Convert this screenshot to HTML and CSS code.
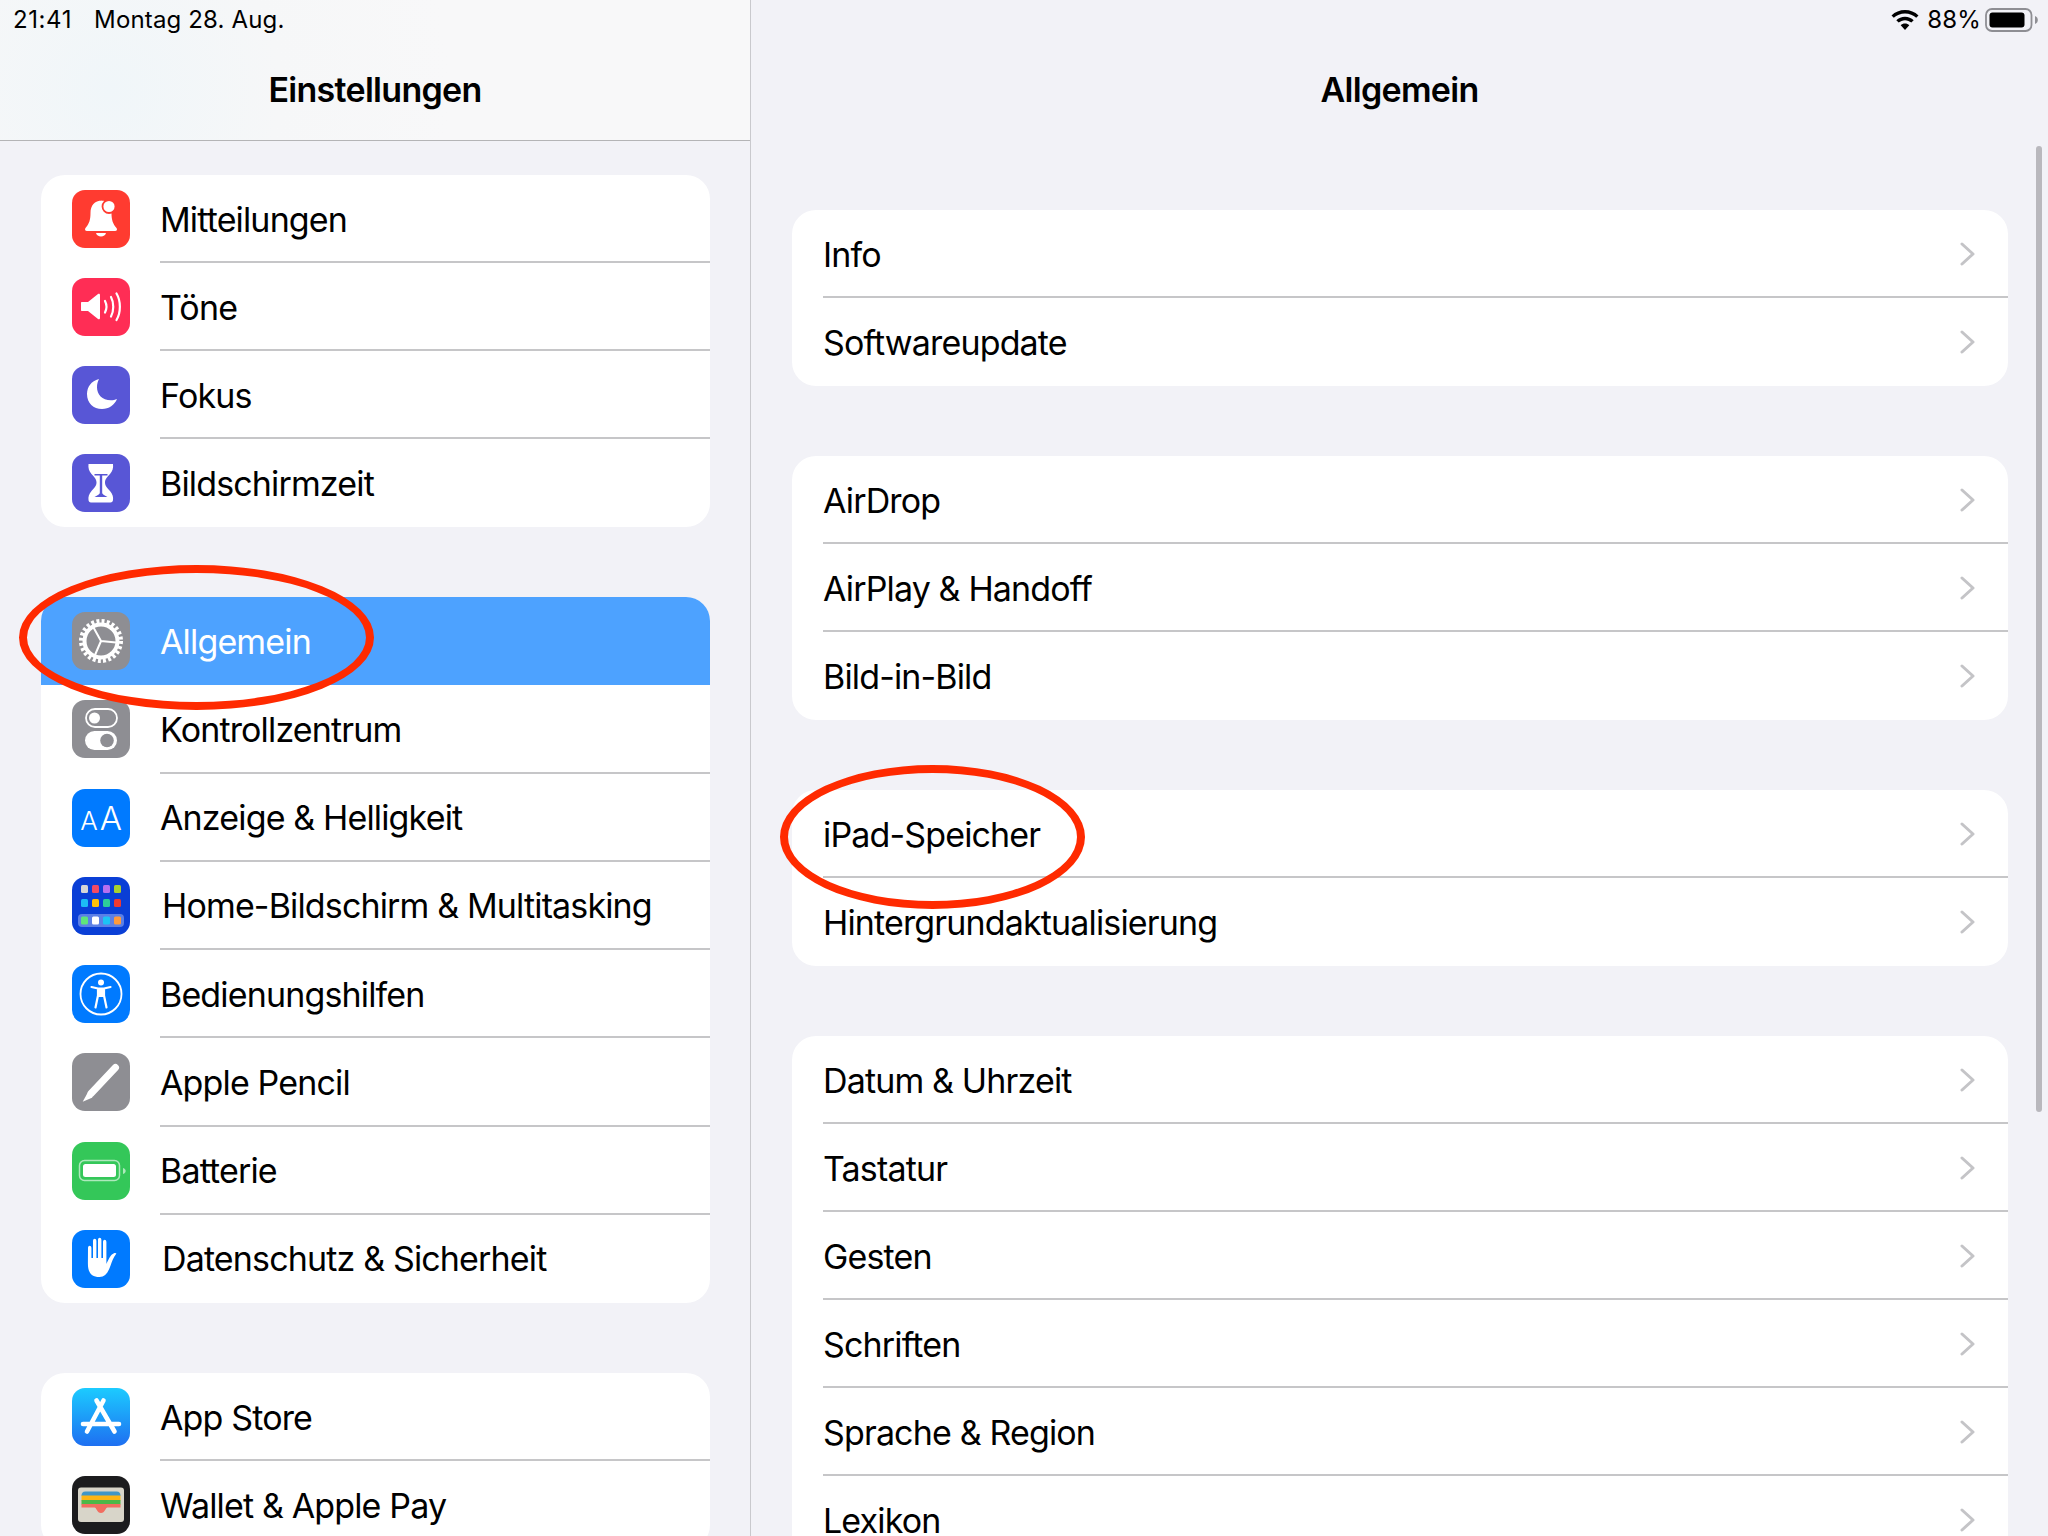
FILE: index.html
```html
<!DOCTYPE html>
<html lang="de">
<head>
<meta charset="utf-8">
<title>Einstellungen</title>
<link rel="stylesheet" href="styles.css">
</head>
<body>
<div class="ipad">
  <aside class="sidebar">
    <header class="side-head">
      <div class="status-left"><span class="clock">21:41</span><span>Montag 28. Aug.</span></div>
      <h1 class="title">Einstellungen</h1>
    </header>
    <div class="side-list">
      <section class="group">
        <div class="row">
          <svg class="icon" viewBox="0 0 58 58"><rect width="58" height="58" rx="13" fill="#ff3b30"/><path d="M30 10.500c-7.500 0-11.500 5-11.500 12.500 0 7-1.500 11-5 15-1 1.200-.5 3 1.500 3h28c2 0 2.500-1.800 1.500-3-3.500-4-5-8-5-15 0-7.500-3-12.500-10.500-12.500z" fill="#fff"/><path d="M24 43h10c-.5 2-2.500 3.500-5 3.500s-4.500-1.500-5-3.500z" fill="#fff"/><circle cx="37" cy="16.500" r="6.500" fill="#fff" stroke="#ff3b30" stroke-width="1.800"/></svg>
          <div class="row-body">Mitteilungen</div>
        </div>
        <div class="row">
          <svg class="icon" viewBox="0 0 58 58"><rect width="58" height="58" rx="13" fill="#ff2d55"/><path d="M10 24h6l10-8c1-.6 2-.2 2 1v23c0 1.200-1 1.600-2 1l-10-8h-6c-.6 0-1-.4-1-1v-7c0-.6.400-1 1-1z" fill="#fff"/><g fill="none" stroke="#fff" stroke-width="2.200" stroke-linecap="round"><path d="M33 23c1.800 3.500 1.800 8 0 11.500"/><path d="M39 19c3 5.500 3 14 0 19.500"/><path d="M44.500 15.500c4.500 7.500 4.500 19 0 26.500"/></g></svg>
          <div class="row-body">Töne</div>
        </div>
        <div class="row">
          <svg class="icon" viewBox="0 0 58 58"><rect width="58" height="58" rx="13" fill="#5856d6"/><path d="M27 13C19 15 15 21 15 28c0 9 6.500 15 15 15 7 0 12.500-4 15-10-2 1-4 1.300-6 1.300-9 0-14-6-14-13 0-3 .7-5.800 2-8.300z" fill="#fff"/></svg>
          <div class="row-body">Fokus</div>
        </div>
        <div class="row">
          <svg class="icon" viewBox="0 0 58 58"><rect width="58" height="58" rx="13" fill="#5856d6"/><path d="M17 10h24c.5 4-.5 7-3 10-2.500 3-5 5-5 8.500 0 3.500 2.500 5.500 5 8.500 2.500 3 3.500 6 3 9-.1 1.500-1 2.500-2.500 2.500h-19.500c-1.500 0-2.400-1-2.500-2.500-.5-3 .5-6 3-9 2.500-3 5-5 5-8.500 0-3.500-2.500-5.500-5-8.500-2.500-3-3.500-6-3-10z" fill="#fff"/><path d="M22.500 20h13v1.500h-5.300v17.500c0 1.500 3 2.500 5.300 4h-13c2.300-1.500 5.300-2.500 5.300-4v-17.500h-5.300z" fill="#5856d6"/></svg>
          <div class="row-body">Bildschirmzeit</div>
        </div>
      </section>

      <section class="group group-tall">
        <div class="row row-active">
          <svg class="icon" viewBox="0 0 58 58"><rect width="58" height="58" rx="13" fill="#8e8e93"/><circle cx="29" cy="29" r="19" fill="none" stroke="#fff" stroke-width="6" stroke-dasharray="2.800 2.174"/><circle cx="29" cy="29" r="16.500" fill="none" stroke="#fff" stroke-width="4"/><path d="M29 29 21.500 15.500M29 29 44 30.500M29 29 23 43" fill="none" stroke="#fff" stroke-width="2"/></svg>
          <div class="row-body">Allgemein</div>
        </div>
        <div class="row">
          <svg class="icon" viewBox="0 0 58 58"><rect width="58" height="58" rx="13" fill="#8e8e93"/><rect x="14" y="9" width="31" height="18" rx="9" fill="none" stroke="#fff" stroke-width="1.800"/><circle cx="22.500" cy="18" r="5.500" fill="#fff"/><rect x="13" y="31" width="32" height="19" rx="9.500" fill="#fff"/><circle cx="35" cy="40.500" r="6.800" fill="#8e8e93"/></svg>
          <div class="row-body">Kontrollzentrum</div>
        </div>
        <div class="row">
          <div class="icon icon-aa"><span class="aa-small">A</span><span class="aa-big">A</span></div>
          <div class="row-body">Anzeige &amp; Helligkeit</div>
        </div>
        <div class="row row-shift">
          <svg class="icon" viewBox="0 0 58 58"><rect width="58" height="58" rx="13" fill="#0a3fd6"/><rect x="9" y="8" width="7" height="8" rx="1.500" fill="#d6d6d6"/><rect x="20" y="8" width="7" height="8" rx="1.500" fill="#f24a63"/><rect x="31" y="8" width="7" height="8" rx="1.500" fill="#b76ff0"/><rect x="42" y="8" width="7" height="8" rx="1.500" fill="#a8d22e"/><rect x="9" y="22" width="7" height="8" rx="1.500" fill="#1cbcf5"/><rect x="20" y="22" width="7" height="8" rx="1.500" fill="#ffc107"/><rect x="31" y="22" width="7" height="8" rx="1.500" fill="#2dcc9a"/><rect x="42" y="22" width="7" height="8" rx="1.500" fill="#f03a30"/><rect x="6" y="37" width="46" height="13" rx="4" fill="#5c80e6"/><rect x="9" y="39.500" width="7" height="8" rx="1.500" fill="#5fe57a"/><rect x="20" y="39.500" width="7" height="8" rx="1.500" fill="#fff"/><rect x="31" y="39.500" width="7" height="8" rx="1.500" fill="#1cc4f5"/><rect x="42" y="39.500" width="7" height="8" rx="1.500" fill="#ff9a3c"/></svg>
          <div class="row-body">Home-Bildschirm &amp; Multitasking</div>
        </div>
        <div class="row">
          <svg class="icon" viewBox="0 0 58 58"><rect width="58" height="58" rx="13" fill="#007aff"/><circle cx="29" cy="29" r="20.500" fill="none" stroke="#fff" stroke-width="1.800"/><circle cx="29" cy="17.500" r="3" fill="#fff"/><path d="M19.500 22 26 23.500v7l-2.500 12M38.500 22 32 23.500v7l2.500 12M26 23.500h6M26 31h6" fill="none" stroke="#fff" stroke-width="2.200" stroke-linecap="round" stroke-linejoin="round"/><path d="M26.500 23.500h5v8h-5z" fill="#fff"/></svg>
          <div class="row-body">Bedienungshilfen</div>
        </div>
        <div class="row">
          <svg class="icon" viewBox="0 0 58 58"><rect width="58" height="58" rx="13" fill="#8e8e93"/><path d="M43.500 14.500 19 40.500" stroke="#fff" stroke-width="7" stroke-linecap="round"/><path d="M15.500 40 20.500 44.500 10.700 48.800z" fill="#fff"/></svg>
          <div class="row-body">Apple Pencil</div>
        </div>
        <div class="row">
          <svg class="icon" viewBox="0 0 58 58"><rect width="58" height="58" rx="13" fill="#34c759"/><rect x="7.500" y="18.500" width="40" height="20" rx="5" fill="none" stroke="#fff" stroke-opacity=".6" stroke-width="1.500"/><rect x="11" y="22" width="33" height="13" rx="2.500" fill="#fff"/><path d="M51 26c1.800.6 2.700 1.500 2.700 3s-.9 2.400-2.700 3z" fill="#fff" fill-opacity=".6"/></svg>
          <div class="row-body">Batterie</div>
        </div>
        <div class="row row-shift">
          <svg class="icon" viewBox="0 0 58 58"><rect width="58" height="58" rx="13" fill="#007aff"/><path d="M16 18c0-3 3.400-3 3.400 0v10h1.600v-17c0-3 3.400-3 3.400 0v17h1.600v-18c0-3 3.400-3 3.400 0v18h1.600v-16c0-3 3.400-3 3.400 0v22c1-2 3-7 5.500-9.500 1.800-1.800 4-2 4.500-1-3 4-4.500 8-6 12.500-1.800 5-4.500 11-11 11-8.500 0-11.500-5-11.500-13.500z" fill="#fff"/></svg>
          <div class="row-body">Datenschutz &amp; Sicherheit</div>
        </div>
      </section>

      <section class="group">
        <div class="row">
          <svg class="icon" viewBox="0 0 58 58"><defs><linearGradient id="appstore" x1="0" y1="0" x2="0" y2="1"><stop offset="0" stop-color="#1ccbff"/><stop offset="1" stop-color="#1e6ff1"/></linearGradient></defs><rect width="58" height="58" rx="13" fill="url(#appstore)"/><path d="M31.500 12.500 15 43.500M24.500 12.500 42.500 43.500M11 36h36" fill="none" stroke="#fff" stroke-width="4.600" stroke-linecap="round"/></svg>
          <div class="row-body">App Store</div>
        </div>
        <div class="row">
          <svg class="icon" viewBox="0 0 58 58"><rect width="58" height="58" rx="13" fill="#1c1c1e"/><rect x="6" y="11.500" width="46" height="34.500" rx="3" fill="#d8d5c9"/><path d="M9.500 20c0-3 1-4.500 4-4.500h31c3 0 4 1.500 4 4.500z" fill="#3f96c8"/><rect x="9.500" y="19.500" width="39" height="5" fill="#fdb515"/><rect x="9.500" y="24" width="39" height="4.500" fill="#4db848"/><path d="M9.500 28h39v3.500h-13c-2 0-2.500 5.500-6.500 5.500s-4.500-5.500-6.500-5.500h-13z" fill="#f26d60"/></svg>
          <div class="row-body">Wallet &amp; Apple Pay</div>
        </div>
      </section>
    </div>
  </aside>

  <main class="detail">
    <header class="detail-head">
      <div class="status-right">
        <svg class="wifi" viewBox="0 0 28 20"><path d="M14 0C8.800 0 4.100 2 .5 5.400l2.300 2.400C5.700 5 9.600 3.400 14 3.400s8.300 1.600 11.200 4.400l2.300-2.400C23.900 2 19.200 0 14 0z" fill="#000"/><path d="M14 6.800c-3.400 0-6.400 1.300-8.700 3.400l2.400 2.400c1.700-1.500 3.900-2.400 6.300-2.400s4.600.9 6.300 2.400l2.400-2.400c-2.300-2.100-5.300-3.400-8.700-3.400z" fill="#000"/><path d="M14 13.500c-1.700 0-3.200.6-4.300 1.700L14 20l4.300-4.800c-1.100-1.100-2.600-1.700-4.300-1.700z" fill="#000"/></svg>
        <span class="pct">88%</span>
        <svg class="batt" viewBox="0 0 53 24"><rect x="1" y="1" width="45.500" height="22" rx="6" fill="none" stroke="#8e8e93" stroke-width="1.800"/><rect x="4.500" y="4.500" width="35" height="15" rx="3" fill="#000"/><path d="M50 8c1.900.7 2.800 2.200 2.800 4s-.9 3.300-2.800 4z" fill="#8e8e93"/></svg>
      </div>
      <h2 class="title">Allgemein</h2>
    </header>
    <div class="detail-list">
      <section class="group group-wide">
        <div class="row row-plain"><div class="row-body">Info<svg class="chev" viewBox="0 0 15 24"><path d="M2 2l11 10L2 22"/></svg></div></div>
        <div class="row row-plain"><div class="row-body">Softwareupdate<svg class="chev" viewBox="0 0 15 24"><path d="M2 2l11 10L2 22"/></svg></div></div>
      </section>
      <section class="group group-wide">
        <div class="row row-plain"><div class="row-body">AirDrop<svg class="chev" viewBox="0 0 15 24"><path d="M2 2l11 10L2 22"/></svg></div></div>
        <div class="row row-plain"><div class="row-body">AirPlay &amp; Handoff<svg class="chev" viewBox="0 0 15 24"><path d="M2 2l11 10L2 22"/></svg></div></div>
        <div class="row row-plain"><div class="row-body">Bild-in-Bild<svg class="chev" viewBox="0 0 15 24"><path d="M2 2l11 10L2 22"/></svg></div></div>
      </section>
      <section class="group group-wide">
        <div class="row row-plain"><div class="row-body">iPad-Speicher<svg class="chev" viewBox="0 0 15 24"><path d="M2 2l11 10L2 22"/></svg></div></div>
        <div class="row row-plain"><div class="row-body">Hintergrundaktualisierung<svg class="chev" viewBox="0 0 15 24"><path d="M2 2l11 10L2 22"/></svg></div></div>
      </section>
      <section class="group group-wide">
        <div class="row row-plain"><div class="row-body">Datum &amp; Uhrzeit<svg class="chev" viewBox="0 0 15 24"><path d="M2 2l11 10L2 22"/></svg></div></div>
        <div class="row row-plain"><div class="row-body">Tastatur<svg class="chev" viewBox="0 0 15 24"><path d="M2 2l11 10L2 22"/></svg></div></div>
        <div class="row row-plain"><div class="row-body">Gesten<svg class="chev" viewBox="0 0 15 24"><path d="M2 2l11 10L2 22"/></svg></div></div>
        <div class="row row-plain"><div class="row-body">Schriften<svg class="chev" viewBox="0 0 15 24"><path d="M2 2l11 10L2 22"/></svg></div></div>
        <div class="row row-plain"><div class="row-body">Sprache &amp; Region<svg class="chev" viewBox="0 0 15 24"><path d="M2 2l11 10L2 22"/></svg></div></div>
        <div class="row row-plain"><div class="row-body">Lexikon<svg class="chev" viewBox="0 0 15 24"><path d="M2 2l11 10L2 22"/></svg></div></div>
      </section>
    </div>
    <div class="scrollbar"></div>
  </main>

  <div class="mark mark-general"></div>
  <div class="mark mark-storage"></div>
</div>
</body>
</html>
```
FILE: styles.css
```css
* { box-sizing: border-box; }
html, body { margin: 0; padding: 0; }
body { font-family: Inter, "Liberation Sans", sans-serif; color: #000; background: #f2f2f7; }

.ipad { position: relative; display: flex; width: 2048px; height: 1536px; overflow: hidden; background: #f2f2f7; }

.sidebar { width: 751px; flex: none; border-right: 1px solid #c9c9cd; }
.side-head {
  height: 141px;
  padding: 7px 0 0 13px;
  border-bottom: 1px solid #b4b4b6;
  background: radial-gradient(circle at 110px 90px, #f0f6f9 0, #f6f7f8 170px, #f8f8f9 340px);
}
.status-left { display: flex; gap: 22px; height: 26px; font-size: 24px; line-height: 26px; letter-spacing: .15px; }
.clock { letter-spacing: .6px; }
.title { margin: 35px 0 0; font-size: 34px; line-height: 44px; font-weight: 600; text-align: center; letter-spacing: -.7px; }
.side-head .title { margin-left: -13px; }

.side-list { display: flex; flex-direction: column; gap: 70px; padding: 34px 0 0 40.5px; }
.group { background: #fff; border-radius: 24px; overflow: hidden; flex: none; }
.side-list .group { width: 669px; }

.row { display: flex; align-items: stretch; height: 88px; padding-left: 31.5px; font-size: 34px; letter-spacing: -.85px; }
.group-tall .row { height: 88.25px; }
.icon { width: 58px; height: 58px; flex: none; align-self: center; margin-right: 30px; display: block; }
.row-body {
  flex: 1;
  display: flex;
  align-items: center;
  justify-content: space-between;
  border-bottom: 2px solid #c6c6c8;
  padding-top: 2px;
}
.group > .row:last-child .row-body, .row-active .row-body { border-bottom: none; padding-top: 0; }
.row-active { background: #4da2ff; color: #fff; }
.row-shift .row-body { padding-left: 2px; }

.icon-aa { display: flex; align-items: baseline; justify-content: center; gap: 2px; padding-top: 7px; background: #007aff; border-radius: 13px; color: #fff; line-height: 44px; font-weight: 300; letter-spacing: 0; }
.aa-small { font-size: 26px; }
.aa-big { font-size: 33px; }

.detail { position: relative; flex: 1; min-width: 0; }
.detail-head { height: 141px; padding-top: 7px; }
.status-right { display: flex; justify-content: flex-end; align-items: center; height: 26px; padding-right: 10px; }
.wifi { width: 28px; height: 20px; margin-right: 8px; }
.pct { font-size: 24px; line-height: 26px; margin-right: 4px; letter-spacing: .15px; }
.batt { width: 53px; height: 24px; }

.detail-list { display: flex; flex-direction: column; gap: 70px; padding: 69px 0 0 40.5px; }
.group-wide { width: 1216px; }
.row-plain .row-body { padding-right: 33px; }
.chev { width: 15px; height: 24px; flex: none; fill: none; stroke: #c4c4c7; stroke-width: 3; stroke-linecap: round; stroke-linejoin: round; }

.scrollbar { position: absolute; top: 146px; right: 6px; width: 6px; height: 966px; border-radius: 3px; background: #b9b8bd; }

.mark { position: absolute; border: 8px solid #ff2a00; border-radius: 50%; pointer-events: none; }
.mark-general { left: 19px; top: 565px; width: 355px; height: 145px; }
.mark-storage { left: 780px; top: 765px; width: 305px; height: 144px; }
```
